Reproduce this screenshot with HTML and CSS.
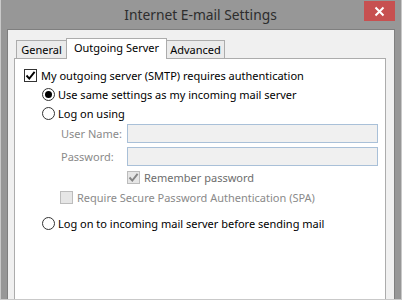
FILE: index.html
```html
<!DOCTYPE html>
<html>
<head>
<meta charset="UTF-8">
<title>Internet E-mail Settings</title>
<link rel="stylesheet" href="styles.css">
</head>
<body>
<div class="window">
	<div class="titlebar">
		<div class="title">Internet E-mail Settings</div>
		<div class="close">
			<svg width="11" height="11" viewBox="0 0 11 11">
				<path d="M1.5 1.5 L9.5 9.5 M9.5 1.5 L1.5 9.5" stroke="#fff" stroke-width="2"/>
			</svg>
		</div>
	</div>

	<div class="client">
		<div class="tabs">
			<div class="tab tab-general">General</div>
			<div class="tab tab-active">Outgoing Server</div>
			<div class="tab tab-advanced">Advanced</div>
		</div>

		<div class="panel">
			<div class="row row-main">
				<span class="check checked">
					<svg width="11" height="11" viewBox="0 0 11 11"><path d="M1.5 5.5 L4.3 8.6 L9.6 1.8" fill="none" stroke="#000" stroke-width="1.9"/></svg>
				</span>
				<span class="text">My outgoing server (SMTP) requires authentication</span>
			</div>

			<div class="row row-radio1">
				<span class="radio on"></span>
				<span class="text">Use same settings as my incoming mail server</span>
			</div>

			<div class="row row-radio2">
				<span class="radio"></span>
				<span class="text">Log on using</span>
			</div>

			<div class="row row-field first">
				<span class="label">User Name:</span>
				<span class="field"></span>
			</div>
			<div class="row row-field">
				<span class="label">Password:</span>
				<span class="field"></span>
			</div>

			<div class="row row-remember">
				<span class="check disabled">
					<svg width="11" height="11" viewBox="0 0 11 11"><path d="M1.5 5.5 L4.3 8.6 L9.6 1.8" fill="none" stroke="#858585" stroke-width="1.9"/></svg>
				</span>
				<span class="text dim">Remember password</span>
			</div>

			<div class="row row-spa">
				<span class="check disabled"></span>
				<span class="text dim2">Require Secure Password Authentication (SPA)</span>
			</div>

			<div class="row row-radio3">
				<span class="radio"></span>
				<span class="text">Log on to incoming mail server before sending mail</span>
			</div>
		</div>
	</div>
</div>
</body>
</html>
```

FILE: styles.css
```css
* {
	margin: 0;
	padding: 0;
	box-sizing: border-box;
}

body {
	width: 402px;
	height: 300px;
	overflow: hidden;
	font-family: "Noto Sans", "Open Sans", sans-serif;
	font-size: 11px;
	color: #000;
}

.window {
	width: 402px;
	height: 300px;
	display: flex;
	flex-direction: column;
	background: #979797;
	border-left: 1px solid #c9c9c9;
	border-right: 1px solid #c9c9c9;
	border-bottom: 1px solid #c9c9c9;
	padding: 0 6px;
}

/* title bar */
.titlebar {
	height: 29px;
	display: grid;
	grid-template-columns: 1fr auto 1fr;
	align-items: start;
}

.title {
	grid-column: 2;
	margin-top: 5px;
	font-size: 13.8px;
	line-height: 20px;
	color: #2d2d2d;
	padding-right: 1px;
}

.close {
	grid-column: 3;
	justify-self: end;
	margin-top: 1px;
	width: 31px;
	height: 20px;
	background: #c75050;
	display: flex;
	align-items: center;
	justify-content: center;
}

/* client area */
.client {
	flex: 1;
	display: flex;
	flex-direction: column;
	background: #f0f0f0;
	border: 1px solid #7f7f7f;
	border-bottom: none;
	padding: 8px 8px 0 6px;
}

.tabs {
	display: flex;
	align-items: flex-end;
	padding-left: 2px;
	height: 20px;
}

.tab {
	height: 18px;
	border: 1px solid #acacac;
	border-bottom: none;
	background: #ebebeb;
	line-height: 18px;
	text-align: center;
	color: #000;
}

.tab-general {
	width: 51px;
}

.tab-active {
	position: relative;
	z-index: 1;
	width: 101px;
	height: 21px;
	margin-left: -1px;
	margin-bottom: -1px;
	background: #fff;
	line-height: 17px;
}

.tab-advanced {
	width: 59px;
	margin-left: -1px;
}

.panel {
	flex: 1;
	background: #fff;
	border: 1px solid #acacac;
	border-bottom: none;
	padding: 10px 0 0 9px;
}

/* rows */
.row {
	display: flex;
	align-items: center;
	height: 13px;
	white-space: nowrap;
}

.text {
	line-height: 13px;
}

.row-main .text {
	margin-left: 4px;
}

.row-radio1 {
	margin-top: 6px;
	padding-left: 18px;
}

.row-radio2 {
	margin-top: 6px;
	padding-left: 18px;
}

.row-radio1 .text,
.row-radio2 .text,
.row-radio3 .text {
	margin-left: 3px;
}

.row-field {
	height: 19px;
	margin-top: 4px;
}

.label {
	width: 103px;
	flex: none;
	padding-left: 37px;
	color: #8a8a8a;
}

.field {
	width: 251px;
	height: 19px;
	background: #f0f0f0;
	border: 1px solid #a9c0d8;
}

.row-remember {
	margin-top: 5px;
	padding-left: 103px;
}

.row-remember .text {
	margin-left: 4px;
}

.row-spa {
	margin-top: 7px;
	padding-left: 36px;
}

.row-spa .text {
	margin-left: 4px;
}

.row-radio3 {
	margin-top: 13px;
	padding-left: 18px;
}

.dim {
	color: #6d6d6d;
}

.dim2 {
	color: #8a8a8a;
}

/* checkbox + radio */
.check {
	width: 13px;
	height: 13px;
	flex: none;
	border: 1px solid #333;
	background: #fff;
	display: flex;
	align-items: center;
	justify-content: center;
}

.check.disabled {
	border-color: #bcbcbc;
	background: #e6e6e6;
}

.radio {
	width: 13px;
	height: 13px;
	flex: none;
	border: 1px solid #333;
	border-radius: 50%;
	background: #fff;
	display: flex;
	align-items: center;
	justify-content: center;
}

.radio.on::after {
	content: "";
	width: 7px;
	height: 7px;
	border-radius: 50%;
	background: #000;
}
```
